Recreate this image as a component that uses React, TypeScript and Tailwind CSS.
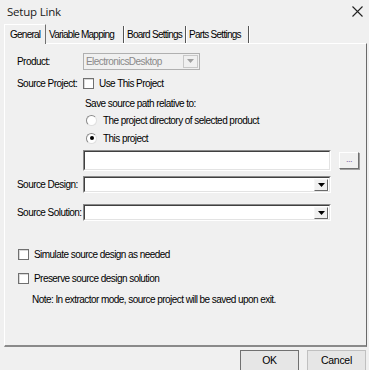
import React from "react";

const font = { fontFamily: '"Liberation Sans", Arial, sans-serif' };

function Sunken({ className = "", children }: { className?: string; children?: React.ReactNode }) {
  return (
    <div
      className={`shrink-0 border border-t-[#8a8a8a] border-l-[#8a8a8a] border-r-[#ffffff] border-b-[#ffffff] ${className}`}
    >
      <div className="h-full w-full border border-t-[#404040] border-l-[#404040] border-r-[#e3e3e3] border-b-[#e3e3e3] bg-white flex items-center">
        {children}
      </div>
    </div>
  );
}

function Arrow() {
  return (
    <div className="ml-auto mr-[1px] h-[12px] w-[14px] flex items-center justify-center border border-t-[#f6f6f6] border-l-[#f6f6f6] border-r-[#6a6a6a] border-b-[#6a6a6a] bg-[#f0f0f0]">
      <svg width="7" height="4" viewBox="0 0 7 4">
        <path d="M0 0 L7 0 L3.5 4 Z" fill="#000" />
      </svg>
    </div>
  );
}

function Check({ label }: { label: string }) {
  return (
    <div className="flex items-center h-[14px] whitespace-nowrap">
      <div className="shrink-0 w-[11px] h-[11px] border border-[#707070] bg-white shadow-[inset_1px_1px_0_#d8d8d8]" />
      <span className="ml-[5px]">{label}</span>
    </div>
  );
}

function Radio({ label, checked }: { label: string; checked?: boolean }) {
  return (
    <div className="flex items-center h-[14px] whitespace-nowrap">
      <div className="shrink-0 w-[11px] h-[11px] rounded-full border border-[#8a8a8a] border-r-[#e0e0e0] border-b-[#e0e0e0] bg-white flex items-center justify-center">
        {checked && <div className="w-[4px] h-[4px] rounded-full bg-black" />}
      </div>
      <span className="ml-[6px]">{label}</span>
    </div>
  );
}

export default function App() {
  return (
    <div
      className="w-[369px] h-[370px] bg-[#f0f0f0] text-[10px] tracking-[-0.55px] text-black overflow-hidden whitespace-nowrap"
      style={font}
    >
      {/* Title bar */}
      <div className="h-[23px] flex items-center pl-[7px] pr-[6px]">
        <span className="text-[11.5px] tracking-[-0.2px] text-[#1a1a1a]" style={{ fontFamily: '"Open Sans", "Noto Sans", sans-serif' }}>
          Setup Link
        </span>
        <svg className="ml-auto" width="11" height="11" viewBox="0 0 11 11">
          <path d="M0.5 0.5 L10.5 10.5 M10.5 0.5 L0.5 10.5" stroke="#222" strokeWidth="1.1" />
        </svg>
      </div>

      {/* Tabs */}
      <div className="flex items-end h-[20px] pl-[4px] tracking-[-0.75px]">
        <div className="h-[20px] w-[42px] pl-[5px] flex items-center border-l border-t border-white border-r border-r-[#707070] bg-[#f0f0f0] relative z-10 -mb-px">
          General
        </div>
        <div className="h-[17px] w-[78px] pl-[3px] flex items-center border-r border-r-[#555] shadow-[1px_0_0_#fff]">
          Variable Mapping
        </div>
        <div className="h-[17px] w-[62px] pl-[3px] flex items-center border-r border-r-[#555] shadow-[1px_0_0_#fff]">
          Board Settings
        </div>
        <div className="h-[17px] w-[63px] pl-[3px] flex items-center border-r border-r-[#555] shadow-[1px_0_0_#fff]">
          Parts Settings
        </div>
      </div>

      {/* Panel */}
      <div className="ml-[4px] mr-[2px] h-[304px] border-t border-l border-white border-r border-r-[#6a6a6a] border-b-2 border-b-[#8a8a8a]">
        <div className="pl-[12px] flex flex-col">
          {/* Product */}
          <div className="mt-[9px] flex items-center h-[16px]">
            <span className="w-[66px] shrink-0">Product:</span>
            <div className="shrink-0 w-[117px] h-[17px] border border-[#b0b0b0] bg-[#f0f0f0] flex items-center pl-[2px] text-[#8a8a8a]">
              ElectronicsDesktop
              <div className="ml-auto mr-[1px] h-[13px] w-[15px] border border-[#c8c8c8] flex items-center justify-center">
                <svg width="7" height="4" viewBox="0 0 7 4">
                  <path d="M0 0 L7 0 L3.5 4 Z" fill="#a0a0a0" />
                </svg>
              </div>
            </div>
          </div>
          {/* Source Project */}
          <div className="mt-[6px] flex items-center h-[16px]">
            <span className="w-[66px] shrink-0">Source Project:</span>
            <Check label="Use This Project" />
          </div>
          <div className="mt-[5px] pl-[68px] h-[14px] flex items-center">Save source path relative to:</div>
          <div className="mt-[3px] pl-[69px]">
            <Radio label="The project directory of selected product" />
          </div>
          <div className="mt-[4px] pl-[69px]">
            <Radio label="This project" checked />
          </div>
          {/* path input */}
          <div className="mt-[5px] flex items-center h-[21px]">
            <Sunken className="ml-[66px] w-[248px] h-[21px]" />
            <div className="ml-[8px] shrink-0 w-[20px] h-[17px] border border-t-white border-l-white border-r-[#707070] border-b-[#707070] shadow-[1px_1px_0_#a0a0a0] flex items-center justify-center text-[#8060a0] text-[9px] leading-none pb-[2px]">
              ...
            </div>
          </div>
          {/* Source Design */}
          <div className="mt-[5px] flex items-center h-[17px]">
            <span className="w-[66px] shrink-0">Source Design:</span>
            <Sunken className="w-[248px] h-[17px]">
              <Arrow />
            </Sunken>
          </div>
          {/* Source Solution */}
          <div className="mt-[11px] flex items-center h-[17px]">
            <span className="w-[66px] shrink-0">Source Solution:</span>
            <Sunken className="w-[248px] h-[17px]">
              <Arrow />
            </Sunken>
          </div>
          <div className="mt-[26px] pl-[1px]">
            <Check label="Simulate source design as needed" />
          </div>
          <div className="mt-[10px] pl-[1px]">
            <Check label="Preserve source design solution" />
          </div>
          <div className="mt-[7px] pl-[15px] h-[14px] flex items-center">
            Note: In extractor mode, source project will be saved upon exit.
          </div>
        </div>
      </div>

      {/* Buttons */}
      <div className="flex justify-end gap-[8px] mt-[3px] pr-[3px] text-[10.5px] tracking-[-0.3px]">
        <div className="w-[59px] h-[22px] border border-[#707070] bg-[#e6e6e6] flex items-center justify-center">
          OK
        </div>
        <div className="w-[59px] h-[22px] border border-[#c0c0c0] bg-[#e6e6e6] flex items-center justify-center">
          Cancel
        </div>
      </div>
    </div>
  );
}
